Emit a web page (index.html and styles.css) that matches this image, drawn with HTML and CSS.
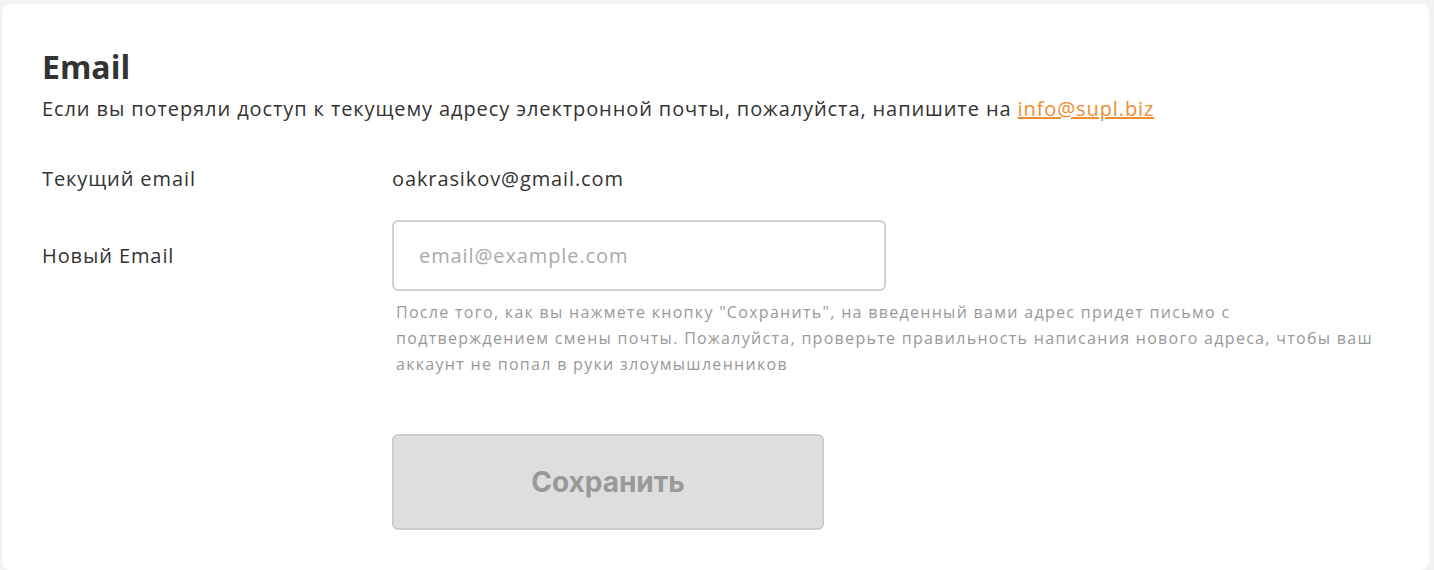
FILE: index.html
```html
<!DOCTYPE html>
<html lang="ru">
<head>
<meta charset="UTF-8">
<meta name="viewport" content="width=device-width, initial-scale=1.0">
<title>Email</title>
<link rel="stylesheet" href="styles.css">
</head>
<body>

<div class="card">
    <h1 class="card-title">Email</h1>
    <p class="card-lead">Если вы потеряли доступ к текущему адресу электронной почты, пожалуйста, напишите на <a href="#" class="link">info@supl.biz</a></p>

    <!-- current email -->
    <div class="form-row row-current">
        <div class="form-label">Текущий email</div>
        <div class="form-value">oakrasikov@gmail.com</div>
    </div>

    <!-- new email -->
    <div class="form-row row-new">
        <div class="form-label label-input">Новый Email</div>
        <div class="form-field">
            <input type="email" class="text-input" placeholder="email@example.com">
            <p class="hint">После того, как вы нажмете кнопку "Сохранить", на введенный вами адрес придет письмо с<br>подтверждением смены почты. Пожалуйста, проверьте правильность написания нового адреса, чтобы ваш аккаунт не попал в руки злоумышленников</p>
            <button class="btn-save" disabled>Сохранить</button>
        </div>
    </div>
</div>

</body>
</html>
```

FILE: styles.css
```css
body {
margin: 4px 5px 0 2px;
background-color: #f1f2f4;
font-family: "Open Sans", "Noto Sans", sans-serif;
color: #333;
}
.card {
background-color: #fff;
border-radius: 8px;
padding: 43px 40px 40px 40px;
min-height: 560px;
box-sizing: border-box;
}
.card-title {
margin: 0;
font-size: 32px;
line-height: 40px;
font-weight: 700;
color: #333;
}
.card-lead {
margin: 8px 0 0 0;
font-size: 20px;
line-height: 28px;
letter-spacing: 0.9px;
color: #333;
}
.link {
color: #ee8d31;
text-decoration: underline;
}
.form-row {
display: flex;
font-size: 20px;
line-height: 28px;
letter-spacing: 0.9px;
}
.row-current {
margin-top: 42px;
}
.row-new {
margin-top: 27px;
}
.form-label {
width: 350px;
flex-shrink: 0;
}
.label-input {
padding-top: 22px;
}
.form-field {
flex: 1;
}
.text-input {
display: block;
width: 494px;
height: 71px;
box-sizing: border-box;
border: 2px solid #cfcfcf;
border-radius: 6px;
padding: 0 25px;
font-family: "Open Sans", "Noto Sans", sans-serif;
font-size: 20px;
letter-spacing: 0.9px;
color: #333;
outline: none;
}
.text-input::placeholder {
color: #aaa;
}
.hint {
margin: 8px 0 0 0;
padding: 0 2px 0 4px;
font-size: 16px;
line-height: 26px;
letter-spacing: 1.3px;
color: #999;
}
.btn-save {
display: block;
margin-top: 57px;
width: 432px;
height: 96px;
background-color: #dedede;
border: 2px solid #cdcdcd;
border-radius: 6px;
font-family: Inter, "Liberation Sans", sans-serif;
font-size: 28px;
font-weight: 700;
letter-spacing: 0;
color: #999;
}
```
